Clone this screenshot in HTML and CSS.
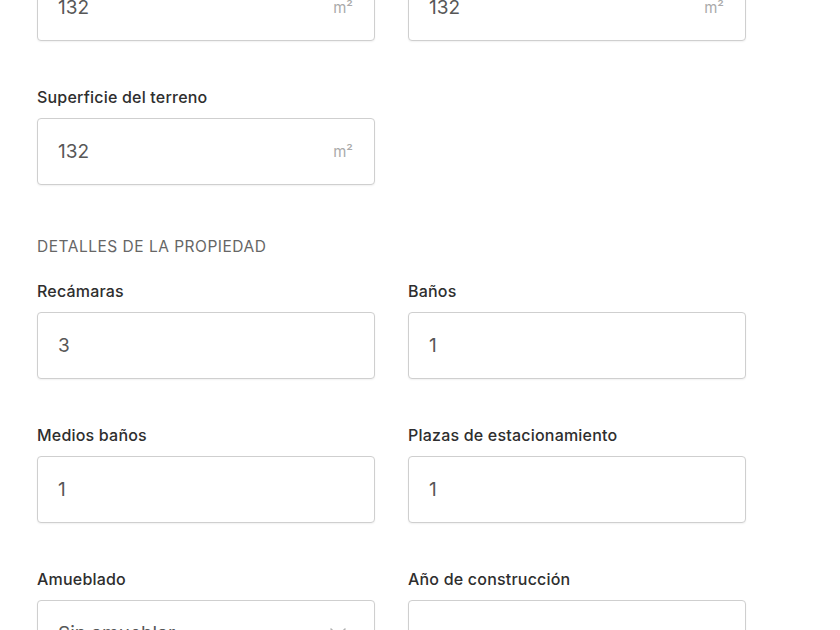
FILE: index.html
```html
<!DOCTYPE html>
<html lang="es">
  <head>
    <meta charset="UTF-8" />
    <meta name="viewport" content="width=device-width, initial-scale=1.0" />
    <title>Detalles de la propiedad</title>
    <link rel="stylesheet" href="styles.css">
  </head>
  <body>
    <form class="form">
      <!-- Superficies -->
      <div class="grid">
        <div class="field">
          <label class="label">Superficie total</label>
          <div class="input-box">
            <input class="input" type="text" value="132" />
            <span class="suffix">m²</span>
          </div>
        </div>
        <div class="field">
          <label class="label">Superficie construida</label>
          <div class="input-box">
            <input class="input" type="text" value="132" />
            <span class="suffix">m²</span>
          </div>
        </div>
        <div class="field">
          <label class="label">Superficie del terreno</label>
          <div class="input-box">
            <input class="input" type="text" value="132" />
            <span class="suffix">m²</span>
          </div>
        </div>
      </div>

      <!-- Detalles -->
      <h3 class="section-title">Detalles de la propiedad</h3>
      <div class="grid">
        <div class="field">
          <label class="label">Recámaras</label>
          <div class="input-box">
            <input class="input" type="text" value="3" />
          </div>
        </div>
        <div class="field">
          <label class="label">Baños</label>
          <div class="input-box">
            <input class="input" type="text" value="1" />
          </div>
        </div>
        <div class="field">
          <label class="label">Medios baños</label>
          <div class="input-box">
            <input class="input" type="text" value="1" />
          </div>
        </div>
        <div class="field">
          <label class="label">Plazas de estacionamiento</label>
          <div class="input-box">
            <input class="input" type="text" value="1" />
          </div>
        </div>
        <div class="field">
          <label class="label">Amueblado</label>
          <div class="input-box select">
            <span class="select-value">Sin amueblar</span>
            <svg class="chevron" width="20" height="20" viewBox="0 0 20 20">
              <path d="M3 5l7 7 7-7" fill="none" stroke="#b0b0b0" stroke-width="1.6" stroke-linecap="round" stroke-linejoin="round" />
            </svg>
          </div>
        </div>
        <div class="field">
          <label class="label">Año de construcción</label>
          <div class="input-box">
            <input class="input" type="text" value="" />
          </div>
        </div>
      </div>
    </form>
  </body>
</html>
```

FILE: styles.css
```css
/* General */
body {
  margin: 0;
  background: #fff;
  font-family: Inter, "Noto Sans", sans-serif;
  color: #222;
  overflow: hidden;
}

.form {
  margin-top: -57px;
  padding-left: 37px;
}

.grid {
  display: grid;
  grid-template-columns: 338px 338px;
  column-gap: 33px;
  row-gap: 46px;
}

/* Fields */
.label {
  display: block;
  font-size: 16px;
  line-height: 20px;
  font-weight: 500;
  letter-spacing: 0.2px;
  color: #2e2e2e;
  margin-bottom: 11px;
}

.input-box {
  display: flex;
  align-items: center;
  height: 67px;
  box-sizing: border-box;
  border: 1px solid #cfcfcf;
  border-radius: 4px;
  box-shadow: 0 1px 2px rgba(0, 0, 0, 0.06);
  padding: 0 21px 0 20px;
  background: #fff;
}

.input {
  flex: 1;
  min-width: 0;
  border: none;
  outline: none;
  padding: 0;
  font-family: inherit;
  font-size: 19px;
  color: #575757;
  background: transparent;
}

.suffix {
  font-size: 15px;
  color: #aaa;
}

/* Select */
.select {
  justify-content: space-between;
  cursor: pointer;
}

.select-value {
  font-size: 19px;
  color: #575757;
}

.chevron {
  margin-right: 5px;
}

/* Section title */
.section-title {
  margin: 53px 0 25px;
  font-size: 15.5px;
  line-height: 18px;
  font-weight: 400;
  letter-spacing: 0.5px;
  text-transform: uppercase;
  color: #666;
}
```
